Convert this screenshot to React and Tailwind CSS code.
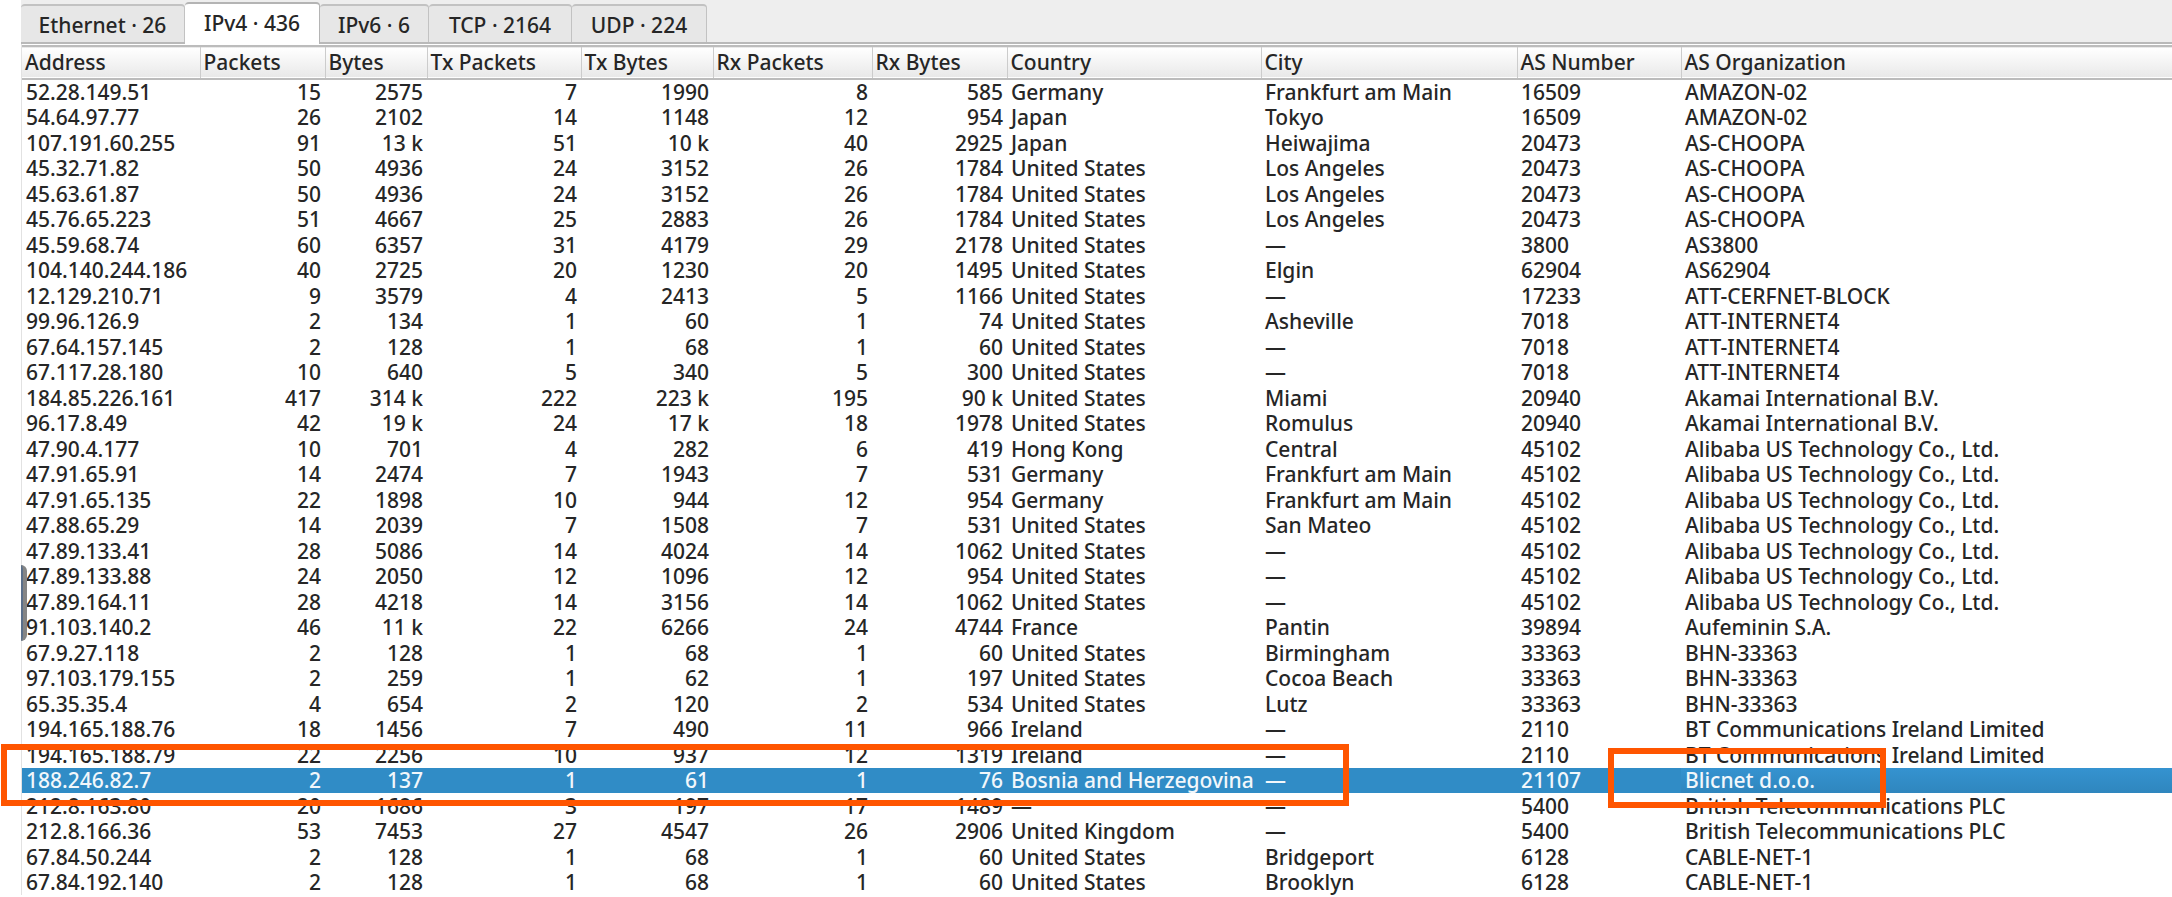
const tabs = [
  { label: 'Ethernet · 26', width: 'w-[164px]' },
  { label: 'IPv4 · 436', width: 'w-[135px]', active: true },
  { label: 'IPv6 · 6', width: 'w-[109px]' },
  { label: 'TCP · 2164', width: 'w-[143px]' },
  { label: 'UDP · 224', width: 'w-[135px]' },
];

const columns = [
  { label: 'Address', width: 'w-[178px]' },
  { label: 'Packets', width: 'w-[125px]', numeric: true },
  { label: 'Bytes', width: 'w-[102px]', numeric: true },
  { label: 'Tx Packets', width: 'w-[154px]', numeric: true },
  { label: 'Tx Bytes', width: 'w-[132px]', numeric: true },
  { label: 'Rx Packets', width: 'w-[159px]', numeric: true },
  { label: 'Rx Bytes', width: 'w-[135px]', numeric: true },
  { label: 'Country', width: 'w-[254px]' },
  { label: 'City', width: 'w-[256px]' },
  { label: 'AS Number', width: 'w-[164px]' },
  { label: 'AS Organization', width: '' },
];

const US = 'United States';
const ALI = 'Alibaba US Technology Co., Ltd.';
const BTI = 'BT Communications Ireland Limited';
const BTP = 'British Telecommunications PLC';

const rows = [
  ['52.28.149.51', '15', '2575', '7', '1990', '8', '585', 'Germany', 'Frankfurt am Main', '16509', 'AMAZON-02'],
  ['54.64.97.77', '26', '2102', '14', '1148', '12', '954', 'Japan', 'Tokyo', '16509', 'AMAZON-02'],
  ['107.191.60.255', '91', '13 k', '51', '10 k', '40', '2925', 'Japan', 'Heiwajima', '20473', 'AS-CHOOPA'],
  ['45.32.71.82', '50', '4936', '24', '3152', '26', '1784', US, 'Los Angeles', '20473', 'AS-CHOOPA'],
  ['45.63.61.87', '50', '4936', '24', '3152', '26', '1784', US, 'Los Angeles', '20473', 'AS-CHOOPA'],
  ['45.76.65.223', '51', '4667', '25', '2883', '26', '1784', US, 'Los Angeles', '20473', 'AS-CHOOPA'],
  ['45.59.68.74', '60', '6357', '31', '4179', '29', '2178', US, '—', '3800', 'AS3800'],
  ['104.140.244.186', '40', '2725', '20', '1230', '20', '1495', US, 'Elgin', '62904', 'AS62904'],
  ['12.129.210.71', '9', '3579', '4', '2413', '5', '1166', US, '—', '17233', 'ATT-CERFNET-BLOCK'],
  ['99.96.126.9', '2', '134', '1', '60', '1', '74', US, 'Asheville', '7018', 'ATT-INTERNET4'],
  ['67.64.157.145', '2', '128', '1', '68', '1', '60', US, '—', '7018', 'ATT-INTERNET4'],
  ['67.117.28.180', '10', '640', '5', '340', '5', '300', US, '—', '7018', 'ATT-INTERNET4'],
  ['184.85.226.161', '417', '314 k', '222', '223 k', '195', '90 k', US, 'Miami', '20940', 'Akamai International B.V.'],
  ['96.17.8.49', '42', '19 k', '24', '17 k', '18', '1978', US, 'Romulus', '20940', 'Akamai International B.V.'],
  ['47.90.4.177', '10', '701', '4', '282', '6', '419', 'Hong Kong', 'Central', '45102', ALI],
  ['47.91.65.91', '14', '2474', '7', '1943', '7', '531', 'Germany', 'Frankfurt am Main', '45102', ALI],
  ['47.91.65.135', '22', '1898', '10', '944', '12', '954', 'Germany', 'Frankfurt am Main', '45102', ALI],
  ['47.88.65.29', '14', '2039', '7', '1508', '7', '531', US, 'San Mateo', '45102', ALI],
  ['47.89.133.41', '28', '5086', '14', '4024', '14', '1062', US, '—', '45102', ALI],
  ['47.89.133.88', '24', '2050', '12', '1096', '12', '954', US, '—', '45102', ALI],
  ['47.89.164.11', '28', '4218', '14', '3156', '14', '1062', US, '—', '45102', ALI],
  ['91.103.140.2', '46', '11 k', '22', '6266', '24', '4744', 'France', 'Pantin', '39894', 'Aufeminin S.A.'],
  ['67.9.27.118', '2', '128', '1', '68', '1', '60', US, 'Birmingham', '33363', 'BHN-33363'],
  ['97.103.179.155', '2', '259', '1', '62', '1', '197', US, 'Cocoa Beach', '33363', 'BHN-33363'],
  ['65.35.35.4', '4', '654', '2', '120', '2', '534', US, 'Lutz', '33363', 'BHN-33363'],
  ['194.165.188.76', '18', '1456', '7', '490', '11', '966', 'Ireland', '—', '2110', BTI],
  ['194.165.188.79', '22', '2256', '10', '937', '12', '1319', 'Ireland', '—', '2110', BTI],
  ['188.246.82.7', '2', '137', '1', '61', '1', '76', 'Bosnia and Herzegovina', '—', '21107', 'Blicnet d.o.o.'],
  ['212.8.163.80', '20', '1686', '3', '197', '17', '1489', '—', '—', '5400', BTP],
  ['212.8.166.36', '53', '7453', '27', '4547', '26', '2906', 'United Kingdom', '—', '5400', BTP],
  ['67.84.50.244', '2', '128', '1', '68', '1', '60', US, 'Bridgeport', '6128', 'CABLE-NET-1'],
  ['67.84.192.140', '2', '128', '1', '68', '1', '60', US, 'Brooklyn', '6128', 'CABLE-NET-1'],
];

const SELECTED = '188.246.82.7';

function Tab({ label, width, active }) {
  const look = active
    ? 'h-[42px] border-[#b4b4b4] bg-white -mb-[2px] pb-[2px]'
    : 'h-[38px] border-[#c2c2c2] bg-[#e7e7e7] pt-[2px]';
  return (
    <button
      type="button"
      role="tab"
      aria-selected={Boolean(active)}
      className={`${width} ${look} flex items-center justify-center rounded-t border-t-2 border-r whitespace-nowrap`}
    >
      {label}
    </button>
  );
}

function Row({ cells }) {
  const selected = cells[0] === SELECTED;
  return (
    <tr
      aria-selected={selected}
      className={`odd:h-[26px] even:h-[25px] ${selected ? 'bg-[#308cc6] text-[#f2f7fb]' : ''}`}
    >
      {cells.map((cell, i) => (
        <td
          key={columns[i].label}
          className={`p-0 pl-1 ${columns[i].numeric ? 'pr-1 text-right' : ''} ${
            selected && i === 10 ? 'bg-linear-to-b from-[#3593d0] to-[#2f86be]' : ''
          }`}
        >
          {cell}
        </td>
      ))}
    </tr>
  );
}

export default function App() {
  return (
    <main className="relative min-h-screen overflow-hidden bg-white pl-[21px] font-['Noto_Sans',sans-serif] text-[21px] leading-[25px] font-medium text-[#262626]">
      <div
        role="tablist"
        className="flex h-[44px] items-end border-b-2 border-[#b9b9b9] bg-[#eeeeee]"
      >
        {tabs.map((tab) => (
          <Tab key={tab.label} {...tab} />
        ))}
      </div>
      <div className="border-l border-[#e2e2e2] pt-px">
        <table className="w-full table-fixed border-collapse">
          <thead>
            <tr className="h-[33px] border-t-2 border-b-2 border-[#bcbcbc] bg-linear-to-b from-white to-[#e9e9e9]">
              {columns.map((column) => (
                <th
                  key={column.label}
                  scope="col"
                  className={`${column.width} border-r border-[#cccccc] p-0 pl-[3px] text-left font-medium whitespace-nowrap last:border-r-0`}
                >
                  {column.label}
                </th>
              ))}
            </tr>
          </thead>
          <tbody className="whitespace-nowrap">
            {rows.map((cells) => (
              <Row key={cells[0]} cells={cells} />
            ))}
          </tbody>
        </table>
      </div>
      <div className="absolute top-[565px] left-[21px] h-[76px] w-[6px] rounded-r-md border-r-4 border-[#858585] bg-[#5b6f8a]" />
      <div className="absolute top-[744px] left-[1px] h-[62px] w-[1348px] border-6 border-[#ff5500]" />
      <div className="absolute top-[748px] left-[1608px] h-[60px] w-[278px] border-6 border-[#ff5500]" />
    </main>
  );
}
